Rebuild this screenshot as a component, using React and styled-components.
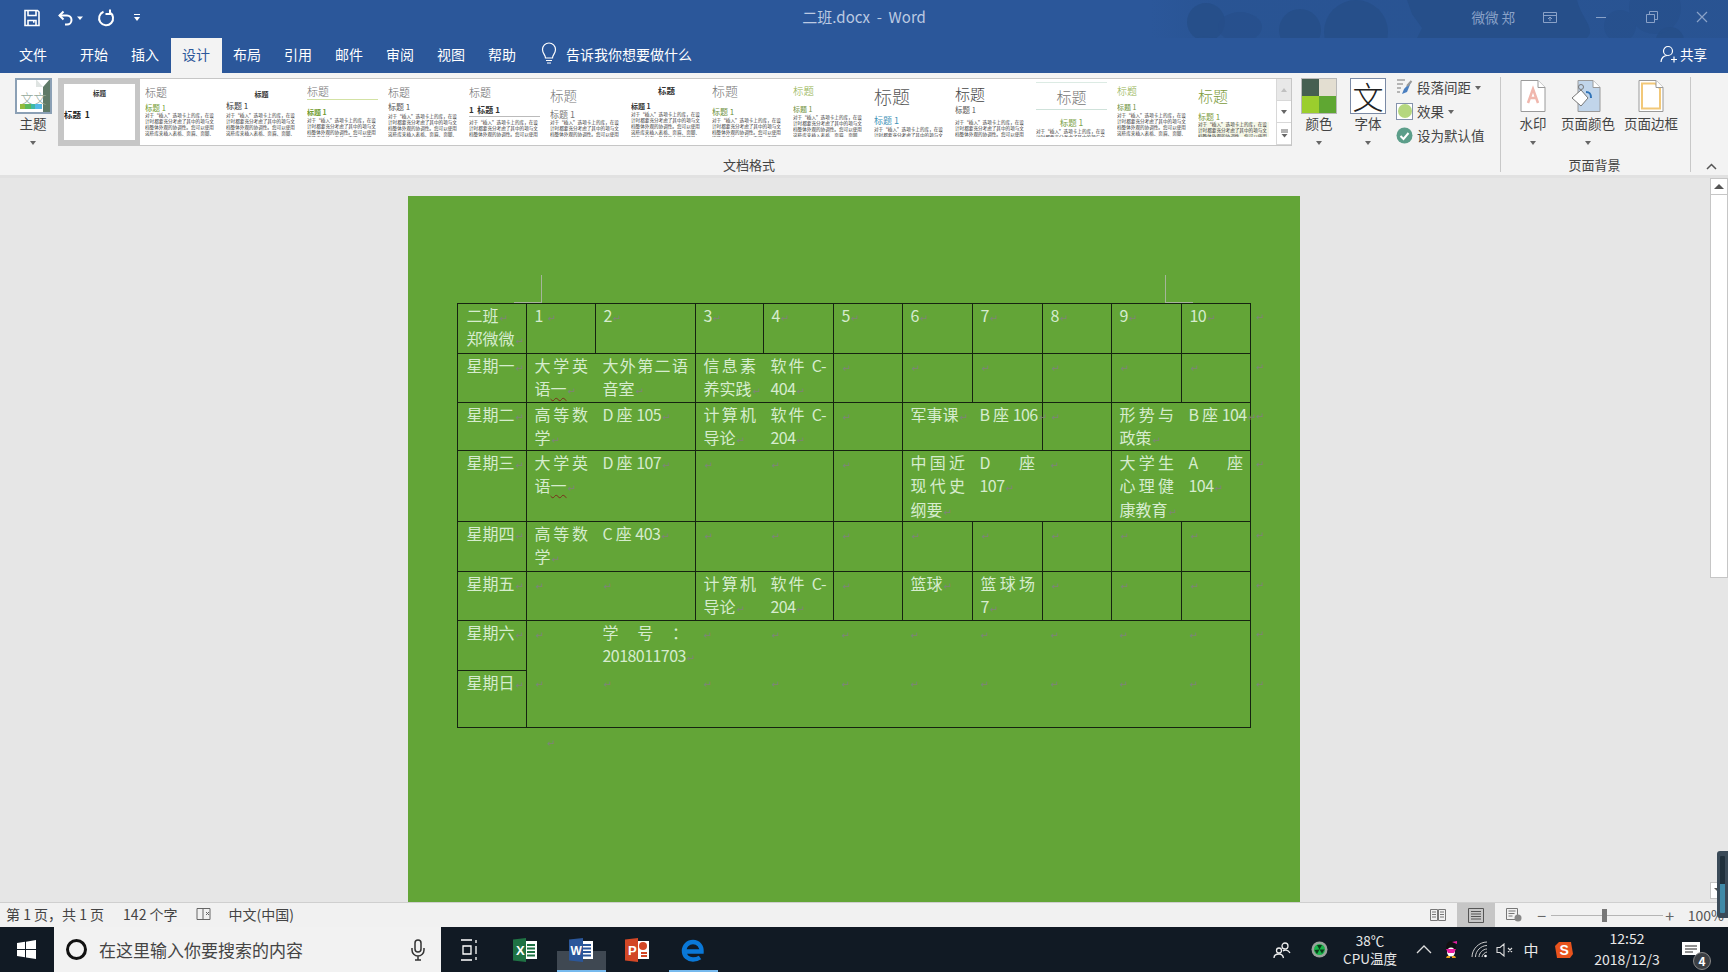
import React from 'react';
import styled, { createGlobalStyle } from 'styled-components';

const Global = createGlobalStyle`
  html, body { margin: 0; padding: 0; width: 1728px; height: 972px; overflow: hidden; }
  body { font-family: "Noto Sans CJK SC", "Liberation Sans", sans-serif; color: #444; }
  * { box-sizing: border-box; }
`;

const Shell = styled.div`
  position: relative; width: 1728px; height: 972px; display: flex; flex-direction: column; overflow: hidden; background: #e6e6e6;
`;

/* ---------- title bar ---------- */
const TitleBar = styled.header`
  position: relative; height: 38px; background: #2b579a; display: grid; grid-template-columns: 1fr auto 1fr; align-items: center; flex: none;
  padding-bottom: 5px;
`;
const Backdrop = styled.svg`position: absolute; left: 0; top: 0; width: 1728px; height: 73px; pointer-events: none;`;
const QuickAccess = styled.div`position: relative; display: flex; align-items: center; padding: 2px 0 0 22px; color: #fff;`;
const QuickIcon = styled.svg`display: block; flex: none; margin-left: ${p => p.$ml || 0}px;`;
const DocTitle = styled.div`position: relative; font-size: 15px; color: #bccae2; white-space: pre;`;
const WindowControls = styled.div`position: relative; display: flex; align-items: center; justify-content: flex-end; color: #8aa2c8; padding-right: 20px;`;
const UserName = styled.span`font-size: 13.5px; margin-right: 28px;`;
const WinCtl = styled.svg`display: block; margin-left: ${p => p.$ml || 0}px;`;

/* ---------- tabs ---------- */
const TabBar = styled.nav`
  position: relative; height: 35px; background: #2b579a; display: flex; align-items: stretch; flex: none; padding-left: 7px;
`;
const FileTab = styled.div`width: 52px; margin-right: 10px; padding-bottom: 3px; display: flex; align-items: center; justify-content: center; color: #fff; font-size: 14px;`;
const Tab = styled.div`
  width: 51px; padding: 0 1px 3px 0; display: flex; align-items: center; justify-content: center; font-size: 14px;
  color: ${p => (p.$active ? '#2b579a' : '#fff')}; background: ${p => (p.$active ? '#f3f3f3' : 'transparent')};
`;
const TellMe = styled.div`display: flex; align-items: center; margin-left: 11px; gap: 7px; padding-bottom: 3px; color: #fff; font-size: 14px;`;
const Share = styled.div`position: absolute; right: 21px; top: 0; height: 35px; display: flex; align-items: center; gap: 2px; padding-bottom: 3px; color: #fff; font-size: 13.5px;`;

/* ---------- ribbon ---------- */
const Ribbon = styled.section`
  height: 105px; flex: none; background: #f3f3f3; border-bottom: 3px solid #e1e1e1; display: flex; align-items: stretch;
`;
const Group = styled.div`
  width: ${p => p.$w}px; margin: 4px 0 3px; border-right: 1px solid #c8c8c8; display: flex; flex-direction: column; flex: none;
`;
const GroupBody = styled.div`flex: 1; display: flex; padding-top: 1px; align-items: flex-start;`;
const GroupLabel = styled.div`height: 14px; line-height: 14px; text-align: center; font-size: 13px; color: #444; padding-right: ${p => p.$pr || 0}px;`;
const Tall = styled.div`
  width: ${p => p.$w || 44}px; margin-left: ${p => p.$ml || 0}px; display: flex; flex-direction: column; align-items: center; flex: none;
`;
const TallLabel = styled.div`height: 20px; line-height: 20px; margin-top: -1px; font-size: 13.5px; color: #444; white-space: nowrap;`;
const Caret = styled.span`
  display: block; margin-top: 8px; width: 0; height: 0; border-left: 3.5px solid transparent; border-right: 3.5px solid transparent; border-top: 4px solid #666;
`;
const InlineCaret = styled(Caret)`display: inline-block; margin: 0 0 2px 4px; vertical-align: middle;`;
const ThemeSwatch = styled.div`
  width: 37px; height: 36px; border: 2px solid #8ba0b5; background: #fff; position: relative; overflow: hidden;
`;
const ThemeGlyph = styled.span`
  position: absolute; left: 4px; top: 11px; font-size: 13px; line-height: 14px; color: #92a89b; white-space: nowrap; letter-spacing: 0; font-weight: 300;
`;
const ThemeCorner = styled.span`
  position: absolute; right: 0; top: 0; bottom: 0; width: 7px; background: #5f7a68;
  &::before { content: ''; position: absolute; left: -7px; top: -1px; border-top: 8px solid #fff; border-right: 7px solid transparent; border-left: 7px solid #dfe4e2; transform: scaleX(1); }
`;
const ThemeStrip = styled.span`position: absolute; left: 3px; right: 8px; bottom: 3px; height: 5px; background: linear-gradient(90deg,#93bb3c 0 25%,#5cb85c 25% 50%,#3fb8a5 50% 70%,#55b8e6 70% 100%);`;

const Gallery = styled.div`
  width: 1234px; height: 68px; border: 1px solid #c6c6c6; background: #fff; display: flex; flex: none;
`;
const Items = styled.div`flex: 1; display: flex; overflow: hidden;`;
const Style = styled.div`
  width: 81px; height: 66px; flex: none; padding: 3px 5px 0 5px; overflow: hidden; background: #fff;
  ${p => p.$selected && 'border: 5px solid #c6c6c6; padding: 0 0 0 0;'}
`;
const StyleClip = styled.div`height: 55px; overflow: hidden; position: relative; color: #333;`;
const StyleTitle = styled.div`
  height: 14px; line-height: 14px; margin-top: ${p => p.$top}px; font-size: ${p => p.$size}px; text-align: ${p => p.$align};
  color: ${p => p.$color}; font-weight: ${p => p.$bold ? 700 : 300}; white-space: nowrap;
`;
const StyleRule = styled.div`height: 1px; background: ${p => p.$color}; margin-top: ${p => p.$top}px; margin-bottom: ${p => -p.$top - 1}px;`;
const StyleHead = styled.div`
  height: 10px; line-height: 10px; margin-top: ${p => p.$top}px; font-size: ${p => p.$size}px; text-align: ${p => p.$align};
  color: ${p => p.$color}; font-weight: ${p => p.$bold ? 700 : 400}; white-space: pre;
`;
const StyleBody = styled.div`
  margin-top: ${p => p.$top}px; font-size: 4.6px; line-height: 5.9px; color: #333; background: ${p => p.$tint || 'transparent'};
`;
const Scroller = styled.div`width: 15px; flex: none; display: flex; flex-direction: column; border-left: 1px solid #d8d8d8; background: #fff;`;
const ScrollStep = styled.div`
  flex: 1; display: flex; align-items: center; justify-content: center; background: ${p => p.$off ? '#e8e8e8' : '#fff'};
  border-bottom: 1px solid #d8d8d8;
`;
const StepTri = styled.span`
  width: 0; height: 0; border-left: 3px solid transparent; border-right: 3px solid transparent;
  ${p => p.$up ? 'border-bottom: 4px solid #c0c0c0;' : 'border-top: 4px solid #666;'}
`;
const ColorSwatch = styled.div`
  width: 36px; height: 36px; display: grid; grid-template-columns: 1fr 1fr; grid-template-rows: 1fr 1fr; border: 1px solid #b8b8b8;
`;
const Cell4 = styled.span`background: ${p => p.$c};`;
const FontSwatch = styled.div`
  width: 36px; height: 36px; border: 1px solid #7b8aa5; background: #fff; display: flex; align-items: center; justify-content: center;
  font-size: 31px; line-height: 34px; color: #222; font-weight: 300;
`;
const OptionStack = styled.div`margin: -3px 0 0 6px; display: flex; flex-direction: column;`;
const OptionRow = styled.div`height: 24px; display: flex; align-items: center; gap: 4px; font-size: 13.5px; color: #444; white-space: nowrap;`;
const EffectBox = styled.span`
  width: 17px; height: 17px; border: 1px solid #8593ac; display: flex; align-items: center; justify-content: center; background: #fff; flex: none;
`;
const EffectDot = styled.span`width: 14px; height: 14px; border-radius: 50%; background: #b5d77f;`;
const PageIconBox = styled.svg`display: block; width: 36px; height: 36px;`;
const CollapseBox = styled.div`flex: 1; display: flex; align-items: flex-end; justify-content: center; padding: 0 0 5px 0; margin-right: -3px;`;

/* ---------- document ---------- */
const Workspace = styled.main`flex: 1; min-height: 0; display: flex; background: #e6e6e6; overflow: hidden;`;
const Canvas = styled.div`flex: 1; display: flex; justify-content: center; padding: 18px 1px 0 0; overflow: hidden;`;
const Page = styled.div`
  position: relative; width: 892px; height: 1260px; flex: none; background: #63a537; padding: 107px 0 0 49px;
`;
const Mark = styled.span`
  position: absolute; width: 28px; height: 28px; left: ${p => p.$x}px; top: 79px;
  border-bottom: 1px solid #a5b59a;
  ${p => p.$right ? 'border-left: 1px solid #a5b59a;' : 'border-right: 1px solid #a5b59a;'}
`;
const Sheet = styled.table`
  border-collapse: separate; border-spacing: 0; table-layout: fixed; width: 833px; font-size: 16px; line-height: 23.3px; color: #d6ecce;
`;
const Row = styled.tr`height: ${p => p.$h}px;`;
const Td = styled.td`
  height: ${p => p.$h}px;
  padding: 0 7px 0 7.5px; vertical-align: top; text-align: justify; overflow: visible; word-break: normal;
  border-left: ${p => p.$noLeft ? '0' : '1px solid #152310'};
  border-top: ${p => p.$noTop ? '0' : '1px solid #152310'};
  border-bottom: ${p => p.$bottom ? '1px solid #152310' : '0'};
  &:first-child { padding-left: 8.5px; }
`;
const EndTd = styled.td`padding: 0 0 0 4px; vertical-align: top; border-left: 1px solid #152310;`;
const Para = styled.div`white-space: ${p => p.$nowrap ? 'nowrap' : 'normal'}; height: auto;`;
const Latin = styled.span`letter-spacing: -0.55px;`;
const Squiggle = styled.span`text-decoration: underline wavy #7a2c1a 1px; text-underline-offset: 2px;`;
const Ret = styled.span`
  display: inline-block; position: relative; left: 1px; width: 0; height: 0; line-height: 0; overflow: visible; white-space: nowrap;
  font-family: "DejaVu Sans", sans-serif; font-size: 10px; color: #7f8478; font-weight: 400;
`;
const AfterTable = styled.div`margin: 1px 0 0 89px; font-size: 16px; line-height: 23px;`;
const Scrollbar = styled.aside`width: 19px; flex: none; display: flex; flex-direction: column; background: #e6e6e6; padding-left: 1px;`;
const ScrollBtn = styled.div`
  height: 17px; background: #fff; border: 1px solid #c6c6c6; display: flex; align-items: center; justify-content: center; flex: none;
`;
const ScrollThumb = styled.div`height: 383px; background: #fff; border: 1px solid #c6c6c6; border-top: 0; flex: none;`;
const ScrollFill = styled.div`flex: 1;`;
const ScrollTail = styled.div`height: 3px; flex: none;`;
const Tri = styled.span`
  width: 0; height: 0; border-left: 5px solid transparent; border-right: 5px solid transparent;
  ${p => p.$down ? 'border-top: 5px solid #555;' : 'border-bottom: 5px solid #555;'}
`;
const SideWidget = styled.div`
  position: absolute; left: 1717px; top: 851px; width: 11px; height: 67px; background: #3a4a58; border-radius: 3px 0 0 3px; padding: 5px 3px;
`;
const SideMeter = styled.div`height: 100%; background: linear-gradient(180deg,#20303c 0 50%,#3f8aa8 50% 100%); border-radius: 1px;`;

/* ---------- status bar ---------- */
const StatusBar = styled.footer`
  height: 25px; flex: none; background: #f1f1f1; border-top: 1px solid #cfcfcf; display: flex; align-items: center; font-size: 14px; color: #444;
`;
const StatusText = styled.span`margin: 0 0 3px ${p => p.$ml}px; white-space: nowrap;`;
const ProofIcon = styled.svg`display: block; margin: 0 0 3px 18px; flex: none;`;
const ViewBtn = styled.span`
  width: ${p => p.$w}px; height: 24px; display: flex; align-items: center; justify-content: center; background: ${p => p.$on ? '#c6c6c6' : 'transparent'}; flex: none;
  margin-left: ${p => p.$ml || 0}px;
`;
const Zoomer = styled.div`margin-left: auto; display: flex; align-items: center; height: 24px; padding-right: 4px;`;
const ZoomGlyph = styled.span`font-size: 16px; line-height: 16px; color: #666; margin-left: ${p => p.$ml}px; width: 10px; text-align: center;`;
const Track = styled.span`position: relative; display: block; width: 112px; height: 1px; background: #b5b5b5; margin-left: 4px;`;
const Thumb = styled.span`position: absolute; left: 51px; top: -6px; width: 5px; height: 13px; background: #777;`;
const ZoomText = styled.span`margin-left: 13px; font-size: 14px; color: #555;`;

/* ---------- taskbar ---------- */
const Taskbar = styled.footer`height: 45px; flex: none; background: #111a24; display: flex; align-items: stretch; color: #fff;`;
const StartBtn = styled.div`width: 54px; display: flex; align-items: center; justify-content: center; flex: none; padding-right: 1px;`;
const Search = styled.div`width: 387px; background: #f2f2f2; display: flex; align-items: center; flex: none; padding-left: 12px; color: #444; font-size: 17px;`;
const Ring = styled.span`width: 21px; height: 21px; border: 3px solid #111; border-radius: 50%; flex: none; margin-right: 12px;`;
const SearchText = styled.span`flex: 1; white-space: nowrap;`;
const MicBox = styled.span`margin-right: 16px; display: flex;`;
const AppBtn = styled.div`
  position: relative; width: 56px; display: flex; align-items: center; justify-content: center; flex: none;
  &::before {
    content: ''; position: absolute; left: 4px; right: 3px; bottom: 2px; height: 19px; background: ${p => p.$focus ? '#3f4852' : 'transparent'};
  }
  &::after {
    content: ''; position: absolute; left: 4px; right: 3px; bottom: 0; height: 2px; background: ${p => p.$open ? '#76b9ed' : 'transparent'};
  }
`;
const AppIcon = styled.svg`position: relative; display: block;`;
const Tray = styled.div`margin-left: auto; padding-right: 25px; display: flex; align-items: center;`;
const TrayItem = styled.div`
  width: ${p => p.$w}px; margin-left: ${p => p.$ml || 0}px; flex: none; display: flex; flex-direction: column; align-items: center; justify-content: center;
  font-size: ${p => p.$fs || 13.5}px; line-height: ${p => p.$lh || 20}px; color: #e8e8e8; white-space: nowrap;
  position: relative; padding-bottom: ${p => p.$pb || 0}px;
`;
const Badge = styled.span`
  position: absolute; left: 14px; top: 10px; width: 18px; height: 18px; border-radius: 50%; background: #3b3f44; border: 1px solid #888;
  color: #fff; font-size: 12px; line-height: 16px; text-align: center; font-weight: 700;
`;

const BODY = '对于“插入”选项卡上的库，在设计时都要充分考虑了其中的项与文档整体外观的协调性。您可以使用这些库来插入表格、页眉、页脚、列表、封面以及其他文档构建基块。';
const G = '#6e6e6e';
const styles = [
  { sel: true },
  { tt: 10, ts: 11, tc: G, h: 26, hs: 7.5, hc: '#6f9a2e', ht: '标题 1', b: 31 },
  { tt: 12, ts: 7, tc: '#333', tb: true, ta: 'center', h: 24, hs: 8, hc: '#333', ht: '标题 1', b: 31 },
  { tt: 9, ts: 11, tc: '#777', rule: '#d3e2a4', ruleAt: 17, h: 30, hs: 7, hc: '#6f9a2e', hb: true, ht: '标题 1', b: 36 },
  { tt: 10, ts: 11, tc: G, h: 25, hs: 8, hc: '#555', ht: '标题 1', b: 32 },
  { tt: 10, ts: 11, tc: G, h: 28, hs: 8, hc: '#333', hb: true, ht: '1  标题 1', rule: '#bbb', ruleAt: 34, b: 38 },
  { tt: 13, ts: 13.5, tc: '#777', h: 33, hs: 9, hc: '#777', ht: '标题 1', b: 38 },
  { tt: 8, ts: 8.5, tc: '#333', tb: true, ta: 'center', h: 24, hs: 7, hc: '#333', hb: true, ht: '标题 1', b: 30 },
  { tt: 9, ts: 13, tc: '#777', h: 30, hs: 8, hc: '#6c8f3a', ht: '标题 1', b: 36 },
  { tt: 9, ts: 10.5, tc: '#8fb04a', h: 27, hs: 7, hc: '#6f8f3a', ht: '标题 1', b: 33 },
  { tt: 14, ts: 18, tc: '#555', h: 39, hs: 9, hc: '#3f93b8', ht: '标题 1', b: 45 },
  { tt: 12, ts: 15, tc: '#444', h: 28, hs: 7.5, hc: '#555', ht: '标题 1', b: 38 },
  { tt: 15, ts: 15, tc: '#777', ta: 'center', h: 40, hs: 8.5, hc: '#7da34a', ha: 'center', ht: '标题 1', b: 47, rule: '#cfe2da', ruleAt: 27, top: '#dcebe4' },
  { tt: 9, ts: 10, tc: '#8fb04a', h: 25, hs: 7, hc: '#6c8f3a', ht: '标题 1', b: 31 },
  { tt: 14, ts: 15, tc: '#7c9b3c', h: 35, hs: 8, hc: '#7c9b3c', ht: '标题 1', b: 40, tint: '#f6f8e8' },
];

function StylePreview({ s }) {
  if (s.sel) {
    return (
      <Style $selected>
        <StyleClip>
          <StyleTitle $top={2} $size={6.5} $align="center" $color="#333" $bold>标题</StyleTitle>
          <StyleHead $top={9} $size={8.5} $align="left" $color="#222" $bold>标题  1</StyleHead>
        </StyleClip>
      </Style>
    );
  }
  const titleTop = s.tt - 7;
  const headGapBase = s.tt + 7;
  const headTop = s.h - 5 - headGapBase;
  const bodyTop = s.b - (s.h + 5);
  return (
    <Style>
      <StyleClip>
        {s.top && <StyleRule $color={s.top} $top={0} />}
        <StyleTitle $top={titleTop} $size={s.ts} $align={s.ta || 'left'} $color={s.tc} $bold={s.tb}>标题</StyleTitle>
        {s.rule && s.ruleAt < s.h && <StyleRule $color={s.rule} $top={s.ruleAt - headGapBase} />}
        <StyleHead $top={headTop} $size={s.hs} $align={s.ha || 'left'} $color={s.hc} $bold={s.hb}>{s.ht}</StyleHead>
        {s.rule && s.ruleAt > s.h && <StyleRule $color={s.rule} $top={s.ruleAt - s.h - 5} />}
        <StyleBody $top={bodyTop} $tint={s.tint}>{BODY}</StyleBody>
      </StyleClip>
    </Style>
  );
}

const R = '↵';
function rich(text) {
  return text.split(/([A-Za-z0-9-]+|\{一\})/).map((part, i) => {
    if (!part) return null;
    if (part === '{一}') return <Squiggle key={i}>一</Squiggle>;
    if (/^[A-Za-z0-9-]+$/.test(part)) return <Latin key={i}>{part}</Latin>;
    return part;
  });
}
const WB = '\u200b';
const rows = [
  { h: 50, none: [], cells: [['二班', '郑微微'], ['1 '], ['2'], ['3'], ['4'], ['5'], ['6'], ['7'], ['8'], ['9'], ['10']] },
  { h: 49, none: [2, 4], cells: [['星期一'], ['大学英语{一}'], ['大外第二语音室'], ['信息素养实践'], [`软件 C-${WB}404`], [''], [''], [''], [''], [''], ['']] },
  { h: 48, none: [2, 4, 7, 10], cells: [['星期二'], ['高等数学'], ['D 座 105'], ['计算机导论'], [`软件 C-${WB}204`], [''], ['军事课'], ['B 座 106!'], [''], ['形势与政策'], ['B 座 104!']] },
  { h: 71, none: [2, 4, 7, 8, 10], cells: [['星期三'], ['大学英语{一}'], ['D 座 107!'], [''], [''], [''], ['中国近现代史纲要'], ['D 座 107'], [''], ['大学生心理健康教育'], ['A 座 104']] },
  { h: 50, none: [2, 4], cells: [['星期四'], ['高等数学'], ['C 座 403!'], [''], [''], [''], [''], [''], [''], [''], ['']] },
  { h: 49, none: [2, 4], cells: [['星期五'], [''], [''], ['计算机导论'], [`软件 C-${WB}204`], [''], ['篮球'], ['篮球场 7'], [''], [''], ['']] },
  { h: 50, none: [2, 3, 4, 5, 6, 7, 8, 9, 10], cells: [['星期六'], [''], ['学 号 ： 2018011703'], [''], [''], [''], [''], [''], [''], [''], ['']] },
  { h: 58, none: [2, 3, 4, 5, 6, 7, 8, 9, 10], noTopFrom: 1, bottom: true, cells: [['星期日'], [''], [''], [''], [''], [''], [''], [''], [''], [''], ['']] },
];
const colW = [69, 69, 100, 68, 70, 69, 70, 70, 69, 70, 69, 40];

function CellParas({ paras }) {
  return paras.map((raw, i) => {
    const nowrap = raw.endsWith('!');
    const text = nowrap ? raw.slice(0, -1) : raw;
    return <Para key={i} $nowrap={nowrap}>{rich(text)}<Ret>{R}</Ret></Para>;
  });
}

const PageFold = ({ children }) => (
  <PageIconBox viewBox="0 0 36 36">
    {children}
    <path d="M6 2.5h17l7 7v24H6z" fill="none" stroke="#9a9a9a" />
    <path d="M23 2.5v7h7" fill="#fff" stroke="#9a9a9a" />
  </PageIconBox>
);

export default function App() {
  return (
    <Shell>
      <Global />
      <TitleBar>
        <Backdrop viewBox="0 0 1728 73">
          <defs>
            <linearGradient id="band" x1="0" x2="1" y1="0" y2="0">
              <stop offset="0" stopColor="#28528f" stopOpacity="0" />
              <stop offset="0.12" stopColor="#28528f" stopOpacity="0.6" />
              <stop offset="1" stopColor="#28528f" stopOpacity="0.7" />
            </linearGradient>
          </defs>
          <rect x="1150" y="0" width="578" height="58" fill="url(#band)" />
          <g fill="#264f8a">
            <circle cx="1206" cy="22" r="19" />
            <ellipse cx="1240" cy="27" rx="22" ry="15" opacity=".65" />
            <path d="M1187 43c10-6 14-8 22-6 20 3 40 3 50 1 2 4-6 6-20 7-18 1-36-3-52-2z" />
            <circle cx="1300" cy="30" r="21" />
            <circle cx="1356" cy="32" r="32" />
            <path d="M1283 46c14 4 60 0 98-4 2 6 3 12 3 16h-70c-12-2-24-6-31-12z" />
            <path d="M1407 0h170c3 14 14 24 13 33-4 12-30 22-58 20-30-2-80-6-120-5l10-20-10-14z" />
            <circle cx="1670" cy="41" r="14" />
            <path d="M1672 58c2-14 14-20 22-18 10 2 13 10 12 18z" />
          </g>
          <g fill="#264f8a" opacity=".5">
            <circle cx="1620" cy="26" r="16" />
            <circle cx="1655" cy="8" r="26" />
          </g>
        </Backdrop>
        <QuickAccess>
          <QuickIcon width="20" height="20" viewBox="0 0 20 20" fill="none" stroke="currentColor" strokeWidth="1.6">
            <path d="M3 2.5h12.5l1.5 1.5v13.5H3z" /><path d="M6 2.5v5h8v-5M6 17.5v-5h8v5M11 14h1.5" />
          </QuickIcon>
          <QuickIcon $ml={15} width="18" height="18" viewBox="0 0 18 18" fill="none" stroke="currentColor" strokeWidth="2">
            <path d="M6.5 2.5 2.5 6.5l4 4" /><path d="M2.5 6.5h7.5a4.5 4.5 0 0 1 0 9H8" />
          </QuickIcon>
          <QuickIcon $ml={1} width="8" height="8" viewBox="0 0 8 8" fill="currentColor"><path d="M1 2.5h6L4 6z" /></QuickIcon>
          <QuickIcon $ml={12} width="20" height="20" viewBox="0 0 20 20" fill="none" stroke="currentColor" strokeWidth="2">
            <path d="M7.500 3.800a7 7 0 1 0 6 .4" /><path d="M14 1.500v4.500h-4.500" />
          </QuickIcon>
          <QuickIcon $ml={17} width="8" height="10" viewBox="0 0 8 10" fill="currentColor"><path d="M1 1h6v1H1zM1 4h6L4 8z" /></QuickIcon>
        </QuickAccess>
        <DocTitle>二班.docx  -  Word</DocTitle>
        <WindowControls>
          <UserName>微微 郑</UserName>
          <WinCtl width="14" height="14" viewBox="0 0 14 14" fill="none" stroke="currentColor"><path d="M.5 2.5h13v10H.5zM.5 5.5h13M7 11V7M5 9l2-2 2 2" /></WinCtl>
          <WinCtl $ml={38} width="12" height="12" viewBox="0 0 12 12" stroke="currentColor"><path d="M1 6.5h10" /></WinCtl>
          <WinCtl $ml={39} width="12" height="12" viewBox="0 0 12 12" fill="none" stroke="currentColor"><path d="M.5 3.5h8v8h-8zM3.5 3.5v-3h8v8h-3" /></WinCtl>
          <WinCtl $ml={38} width="12" height="12" viewBox="0 0 12 12" stroke="currentColor" strokeWidth="1.2"><path d="M1 1l10 10M11 1 1 11" /></WinCtl>
        </WindowControls>
      </TitleBar>

      <TabBar>
        <FileTab>文件</FileTab>
        <Tab>开始</Tab>
        <Tab>插入</Tab>
        <Tab $active>设计</Tab>
        <Tab>布局</Tab>
        <Tab>引用</Tab>
        <Tab>邮件</Tab>
        <Tab>审阅</Tab>
        <Tab>视图</Tab>
        <Tab>帮助</Tab>
        <TellMe>
          <svg width="20" height="24" viewBox="0 0 20 24" fill="none" stroke="#fff" strokeWidth="1.2">
            <path d="M6.5 16c0-3-3-4.500-3-8.500a6.500 6.500 0 0 1 13 0c0 4-3 5.500-3 8.500zM7 18.500h6M8 21h4" />
          </svg>
          告诉我你想要做什么
        </TellMe>
        <Share>
          <svg width="18" height="18" viewBox="0 0 18 18" fill="none" stroke="#fff" strokeWidth="1.2">
            <circle cx="8" cy="6" r="4.500" /><path d="M1 17c0-4 3-6.500 6-6.500M11 14.500h6M14 11.500v6" />
          </svg>
          共享
        </Share>
      </TabBar>

      <Ribbon>
        <Group $w={1501}>
          <GroupBody>
            <Tall $w={50} $ml={8}>
              <ThemeSwatch>
                <ThemeCorner />
                <ThemeGlyph>文文</ThemeGlyph>
                <ThemeStrip />
              </ThemeSwatch>
              <TallLabel>主题</TallLabel>
              <Caret />
            </Tall>
            <Gallery>
              <Items>
                {styles.map((s, i) => <StylePreview key={i} s={s} />)}
              </Items>
              <Scroller>
                <ScrollStep $off><StepTri $up /></ScrollStep>
                <ScrollStep><StepTri /></ScrollStep>
                <ScrollStep>
                  <svg width="9" height="9" viewBox="0 0 9 9"><path d="M1 1h7M1 3h7" stroke="#666" /><path d="M1.500 5h6L4.500 8.500z" fill="#666" /></svg>
                </ScrollStep>
              </Scroller>
            </Gallery>
            <Tall $ml={5}>
              <ColorSwatch>
                <Cell4 $c="#455f51" /><Cell4 $c="#e3ded1" /><Cell4 $c="#9bce2d" /><Cell4 $c="#5fa732" />
              </ColorSwatch>
              <TallLabel>颜色</TallLabel>
              <Caret />
            </Tall>
            <Tall $ml={5}>
              <FontSwatch>文</FontSwatch>
              <TallLabel>字体</TallLabel>
              <Caret />
            </Tall>
            <OptionStack>
              <OptionRow>
                <svg width="17" height="18" viewBox="0 0 17 18" fill="none">
                  <path d="M1 2h8M1 6h6M1 10h4M1 14h3" stroke="#777" /><path d="M15.500 3 8 11l-2 5 5-2z" fill="#4a7fc0" /><path d="M15.500 3 11 8" stroke="#999" strokeWidth="2" />
                </svg>
                <span>段落间距<InlineCaret /></span>
              </OptionRow>
              <OptionRow>
                <EffectBox><EffectDot /></EffectBox>
                <span>效果<InlineCaret /></span>
              </OptionRow>
              <OptionRow>
                <svg width="17" height="17" viewBox="0 0 17 17"><circle cx="8.500" cy="8.500" r="8" fill="#5c9e8a" /><path d="M4.500 9l3 3 5-6" fill="none" stroke="#fff" strokeWidth="2" /></svg>
                <span>设为默认值</span>
              </OptionRow>
            </OptionStack>
          </GroupBody>
          <GroupLabel $pr={2}>文档格式</GroupLabel>
        </Group>
        <Group $w={190}>
          <GroupBody>
            <Tall $w={48} $ml={8}>
              <PageFold>
                <path d="M6 2.500h17l7 7v24H6z" fill="#fff" />
                <path d="M13 25 18 11l5 14M15 20h6" fill="none" stroke="#f0b7ad" strokeWidth="2.500" />
              </PageFold>
              <TallLabel>水印</TallLabel>
              <Caret />
            </Tall>
            <Tall $w={58} $ml={2}>
              <PageIconBox viewBox="0 0 36 36">
                <path d="M8 2.500h15l7 7v24H8z" fill="#c1d5ea" stroke="#9a9a9a" />
                <path d="M23 2.500v7h7" fill="#fff" stroke="#9a9a9a" />
                <path d="M2 20 11 12l7 8-7 8z" fill="#fff" stroke="#777" />
                <path d="M16 14c4 0 5 2 5 6" fill="none" stroke="#2f73b8" strokeWidth="2" />
                <circle cx="11" cy="9" r="2.500" fill="none" stroke="#777" />
              </PageIconBox>
              <TallLabel>页面颜色</TallLabel>
              <Caret />
            </Tall>
            <Tall $w={58} $ml={5}>
              <PageFold>
                <path d="M6 2.500h17l7 7v24H6z" fill="#fff" />
                <path d="M9 5.500h13l5 5v20H9z" fill="none" stroke="#f2c878" strokeWidth="2" />
              </PageFold>
              <TallLabel>页面边框</TallLabel>
            </Tall>
          </GroupBody>
          <GroupLabel $pr={2}>页面背景</GroupLabel>
        </Group>
        <CollapseBox>
          <svg width="11" height="7" viewBox="0 0 11 7" fill="none" stroke="#555" strokeWidth="1.500"><path d="M1 6l4.500-4.500L10 6" /></svg>
        </CollapseBox>
      </Ribbon>

      <Workspace>
        <Canvas>
          <Page>
            <Mark $x={106} />
            <Mark $x={757} $right />
            <Sheet>
              <colgroup>{colW.map((w, i) => <col key={i} width={w} />)}</colgroup>
              <tbody>
                {rows.map((row, r) => (
                  <Row key={r} $h={row.h}>
                    {row.cells.map((paras, c) => (
                      <Td
                        key={c}
                        $h={row.h}
                        $noLeft={row.none.includes(c)}
                        $noTop={row.noTopFrom !== undefined && c >= row.noTopFrom}
                        $bottom={row.bottom}
                      >
                        <CellParas paras={paras} />
                      </Td>
                    ))}
                    <EndTd><Ret>{R}</Ret></EndTd>
                  </Row>
                ))}
              </tbody>
            </Sheet>
            <AfterTable><Ret>{R}</Ret></AfterTable>
          </Page>
        </Canvas>
        <Scrollbar>
          <ScrollBtn><Tri /></ScrollBtn>
          <ScrollThumb />
          <ScrollFill />
          <ScrollBtn><Tri $down /></ScrollBtn>
          <ScrollTail />
        </Scrollbar>
      </Workspace>
      <SideWidget><SideMeter /></SideWidget>

      <StatusBar>
        <StatusText $ml={6}>第 1 页，共 1 页</StatusText>
        <StatusText $ml={19}>142 个字</StatusText>
        <ProofIcon width="16" height="16" viewBox="0 0 16 16" fill="none" stroke="#666"><path d="M1 2.500h6v11H1zM7 2.500h7v11H7M10 6l3 3M13 6l-3 3" /></ProofIcon>
        <StatusText $ml={17}>中文(中国)</StatusText>
        <Zoomer>
          <ViewBtn $w={19}>
            <svg width="16" height="14" viewBox="0 0 16 14" fill="none" stroke="#777"><path d="M.5 1.500h7v11h-7zM8.500 1.500h7v11h-7zM2 4h4M2 6.500h4M2 9h4M10 4h4M10 6.500h4M10 9h4" /></svg>
          </ViewBtn>
          <ViewBtn $w={38} $ml={9} $on>
            <svg width="16" height="15" viewBox="0 0 16 15" fill="none" stroke="#555"><path d="M.5.500h15v14H.5zM3 3.500h10M3 6h10M3 8.500h10M3 11h10" /></svg>
          </ViewBtn>
          <ViewBtn $w={18} $ml={10}>
            <svg width="16" height="14" viewBox="0 0 16 14" fill="none" stroke="#777"><path d="M.5.500h11v11H.5zM2.500 3h7M2.500 5.500h6M2.500 8h4" /><circle cx="12" cy="10" r="3.500" fill="#888" stroke="none" /></svg>
          </ViewBtn>
          <ZoomGlyph $ml={14}>−</ZoomGlyph>
          <Track><Thumb /></Track>
          <ZoomGlyph $ml={2}>+</ZoomGlyph>
          <ZoomText>100%</ZoomText>
        </Zoomer>
      </StatusBar>

      <Taskbar>
        <StartBtn>
          <svg width="19" height="19" viewBox="0 0 19 19" fill="#fff"><path d="M0 3l8-1.200V9H0zM9 1.700 19 0v9H9zM0 10h8v7.200L0 16zM9 10h10v9L9 17.400z" /></svg>
        </StartBtn>
        <Search>
          <Ring />
          <SearchText>在这里输入你要搜索的内容</SearchText>
          <MicBox>
            <svg width="14" height="22" viewBox="0 0 14 22" fill="none" stroke="#333" strokeWidth="1.500"><rect x="4" y="1" width="6" height="12" rx="3" /><path d="M1 9v2a6 6 0 0 0 12 0V9M7 17v4M4 21h6" /></svg>
          </MicBox>
        </Search>
        <AppBtn>
          <AppIcon width="18" height="22" viewBox="0 0 18 22" fill="none" stroke="#fff" strokeWidth="1.300"><path d="M1 1h11M1 21h11M3 7h8v8H3zM16 1v3M16 7v8M16 18v3" /></AppIcon>
        </AppBtn>
        <AppBtn>
          <AppIcon width="26" height="26" viewBox="0 0 26 26">
            <path d="M11 4h14v18H11z" fill="#fff" /><path d="M15 8h8M15 11.500h8M15 15h8M15 18.500h8" stroke="#1f7244" strokeWidth="2" />
            <path d="M1 2.500 14 1v24L1 23.500z" fill="#1f7244" /><text x="4" y="18" fontFamily="Liberation Sans" fontWeight="700" fontSize="13" fill="#fff">X</text>
          </AppIcon>
        </AppBtn>
        <AppBtn $focus $open>
          <AppIcon width="26" height="26" viewBox="0 0 26 26">
            <path d="M11 4h14v18H11z" fill="#fff" /><path d="M15 8h8M15 11.500h8M15 15h8M15 18.500h8" stroke="#2b579a" strokeWidth="2" />
            <path d="M1 2.500 15 1v24L1 23.500z" fill="#2b579a" /><text x="2.500" y="18" fontFamily="Liberation Sans" fontWeight="700" fontSize="12" fill="#fff">W</text>
          </AppIcon>
        </AppBtn>
        <AppBtn>
          <AppIcon width="26" height="26" viewBox="0 0 26 26">
            <path d="M11 4h14v18H11z" fill="#fff" /><path d="M17 16h6M17 19h6" stroke="#d24726" strokeWidth="2" /><circle cx="19" cy="9" r="4" fill="#d24726" />
            <path d="M1 2.500 14 1v24L1 23.500z" fill="#d24726" /><text x="4" y="18" fontFamily="Liberation Sans" fontWeight="700" fontSize="13" fill="#fff">P</text>
          </AppIcon>
        </AppBtn>
        <AppBtn $open>
          <AppIcon width="24" height="24" viewBox="0 0 24 24" fill="none" stroke="#0a78d7" strokeWidth="4.500">
            <path d="M4 13.500h16.500c.3-5-3-9.500-8.500-9.500-5 0-9 4-9 9s4 8.500 9 8.500c3 0 5.500-1 7-2" />
          </AppIcon>
        </AppBtn>
        <Tray>
          <TrayItem $w={18}>
            <svg width="18" height="18" viewBox="0 0 18 18" fill="none" stroke="#eee" strokeWidth="1.300"><circle cx="6" cy="9.500" r="2.500" /><circle cx="12" cy="5" r="3" /><path d="M1 17c0-2.500 2-4 5-4s4 1.500 4.500 4M10 10c1-1 5-2 7 2" /></svg>
          </TrayItem>
          <TrayItem $w={18} $ml={19}>
            <svg width="17" height="17" viewBox="0 0 17 17"><circle cx="8.500" cy="8.500" r="8" fill="#9aa39c" /><circle cx="8.500" cy="8.500" r="5.500" fill="#19b54a" /><path d="M8.500 8.500 6 4h5zM8.500 8.500l-5 .5 2.500 4zM8.500 8.500l2.500 4 2.500-4z" fill="#0b3a18" /></svg>
          </TrayItem>
          <TrayItem $w={60} $ml={12} $lh={18} $pb={2}>
            <span>38℃</span>
            <span>CPU温度</span>
          </TrayItem>
          <TrayItem $w={16} $ml={16}>
            <svg width="16" height="9" viewBox="0 0 16 9" fill="none" stroke="#ddd" strokeWidth="1.300"><path d="M1 8l7-7 7 7" /></svg>
          </TrayItem>
          <TrayItem $w={18} $ml={10}>
            <svg width="14" height="19" viewBox="0 0 14 19">
              <ellipse cx="7" cy="8" rx="5" ry="7" fill="#111" /><ellipse cx="7" cy="12" rx="4" ry="4.500" fill="#fff" /><path d="M2 9h10l-2 4H4z" fill="#e81ca0" /><path d="M8 2l5-1v3z" fill="#e81ca0" /><path d="M3 16h3v2H2zM8 16h3l1 2H8z" fill="#e7a11b" />
            </svg>
          </TrayItem>
          <TrayItem $w={18} $ml={10}>
            <svg width="17" height="17" viewBox="0 0 17 17" fill="none" stroke="#ccc" strokeWidth="1"><path d="M1 16C1 8 8 1 16 1M4.500 16c0-6 5.500-11.500 11.500-11.500M8 16c0-4 4-8 8-8M11 16c0-2 3-5 5-5" /><circle cx="14.500" cy="15" r="1.300" fill="#fff" stroke="none" /></svg>
          </TrayItem>
          <TrayItem $w={20} $ml={7}>
            <svg width="18" height="14" viewBox="0 0 18 14" fill="none" stroke="#ddd" strokeWidth="1.100"><path d="M1 4.500h3L8 1v12L4 9.500H1zM12 5l4 4M16 5l-4 4" /></svg>
          </TrayItem>
          <TrayItem $w={16} $ml={8} $fs={15}>中</TrayItem>
          <TrayItem $w={18} $ml={16}>
            <svg width="18" height="18" viewBox="0 0 18 18">
              <path d="M4 1h12l2 12-3 4H2L0 5z" fill="#e9531d" /><text x="4.500" y="14" fontFamily="Liberation Sans" fontWeight="700" fontSize="14" fill="#fff">S</text>
            </svg>
          </TrayItem>
          <TrayItem $w={80} $ml={14} $lh={21} $fs={14} $pb={2}>
            <span>12:52</span>
            <span>2018/12/3</span>
          </TrayItem>
          <TrayItem $w={24} $ml={12}>
            <svg width="18" height="16" viewBox="0 0 18 16" fill="#fff"><path d="M0 0h18v13H0z" /><path d="M3 4h12M3 7h12M3 10h8" stroke="#222" strokeWidth="1.200" /></svg>
            <Badge>4</Badge>
          </TrayItem>
        </Tray>
      </Taskbar>
    </Shell>
  );
}
